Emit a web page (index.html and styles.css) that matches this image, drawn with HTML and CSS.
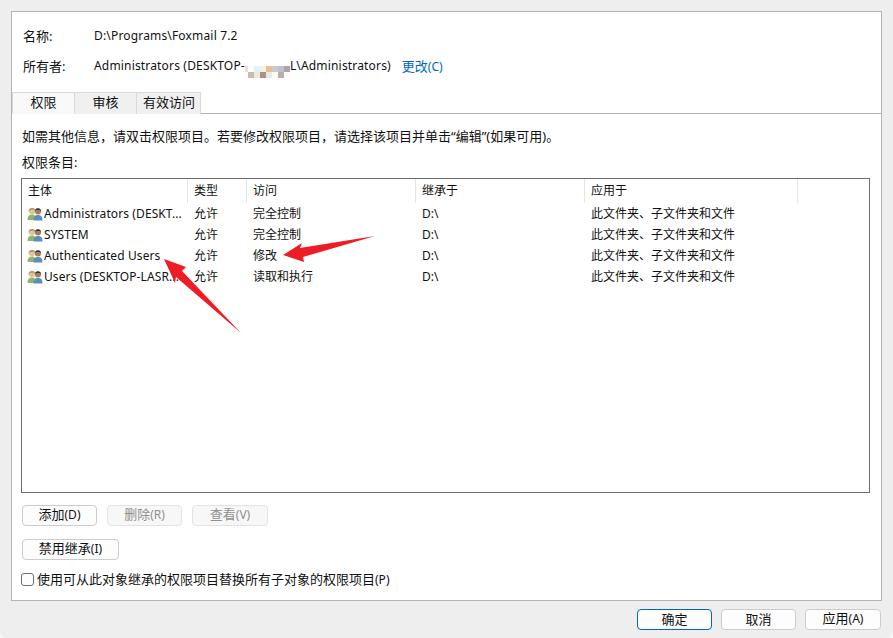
FILE: index.html
```html
<!DOCTYPE html>
<html lang="zh-CN">
<head>
<meta charset="utf-8">
<title>权限</title>
<link rel="stylesheet" href="styles.css">
</head>
<body>
<svg width="0" height="0" class="defs"><defs>
<symbol id="users" viewBox="0 0 16 16">
<path d="M0.500 14 C0.500 10 2.500 8.500 5 8.500 C7.500 8.500 9 10 9 14 Z" fill="#8fb56c"/>
<circle cx="5" cy="5" r="3.200" fill="#e0c49c"/>
<path d="M1.600 6 C1 1 8.500 0.500 8.300 5.500 L7 3.800 L3 4 Z" fill="#ab9a62"/>
<path d="M6.500 14.500 C6.500 10 8.500 9 11 9 C13.500 9 15.500 10 15.500 14.500 Z" fill="#5b8dbd"/>
<circle cx="11" cy="5.500" r="3" fill="#a67c5c"/>
<path d="M8 5.500 C7.500 1 14.500 1 14 5.500 L13 4 L9 4 Z" fill="#2c3038"/>
</symbol>
</defs></svg>
<main class="panel">
<div class="info">
<div class="info-row"><span class="info-label">名称:</span><span class="latin">D:\Programs\Foxmail 7.2</span></div>
<div class="info-row"><span class="info-label">所有者:</span><span class="latin">Administrators (DESKTOP-<span class="mosaic"><i class="m1"></i><i class="m2"></i><i class="m3"></i><i class="m4"></i><i class="m5"></i><i class="m6"></i><i class="m7"></i><i class="m8"></i><i class="m9"></i><i class="m10"></i><i class="m11"></i><i class="m12"></i><i class="m13"></i><i class="m14"></i><i class="m15"></i><i class="m16"></i></span>L\Administrators)</span><a class="change">更改<span class="key">(C)</span></a></div>
</div>
<div class="tabs">
<div class="tab tab-active">权限</div>
<div class="tab tab-2">审核</div>
<div class="tab tab-3">有效访问</div>
</div>
<div class="body">
<p class="hint">如需其他信息，请双击权限项目。若要修改权限项目，请选择该项目并单击“编辑”(如果可用)。</p>
<p class="entries">权限条目:</p>
<div class="list">
<div class="row head"><div class="c c1">主体</div><div class="c c2">类型</div><div class="c c3">访问</div><div class="c c4">继承于</div><div class="c c5">应用于</div></div>
<div class="row"><div class="c c1"><svg class="ico"><use href="#users"/></svg><span class="clip latin">Administrators (DESKT...</span></div><div class="c c2">允许</div><div class="c c3">完全控制</div><div class="c c4">D:\</div><div class="c c5">此文件夹、子文件夹和文件</div></div>
<div class="row"><div class="c c1"><svg class="ico"><use href="#users"/></svg><span class="clip latin">SYSTEM</span></div><div class="c c2">允许</div><div class="c c3">完全控制</div><div class="c c4">D:\</div><div class="c c5">此文件夹、子文件夹和文件</div></div>
<div class="row"><div class="c c1"><svg class="ico"><use href="#users"/></svg><span class="clip latin">Authenticated Users</span></div><div class="c c2">允许</div><div class="c c3">修改</div><div class="c c4">D:\</div><div class="c c5">此文件夹、子文件夹和文件</div></div>
<div class="row"><div class="c c1"><svg class="ico"><use href="#users"/></svg><span class="clip latin">Users (DESKTOP-LASR...</span></div><div class="c c2">允许</div><div class="c c3">读取和执行</div><div class="c c4">D:\</div><div class="c c5">此文件夹、子文件夹和文件</div></div>
</div>
<div class="actions">
<button class="btn">添加<span class="key">(D)</span></button>
<button class="btn" disabled>删除<span class="key">(R)</span></button>
<button class="btn" disabled>查看<span class="key">(V)</span></button>
</div>
<div class="inherit"><button class="btn btn-wide">禁用继承<span class="key">(I)</span></button></div>
<label class="check"><span class="box"></span><span>使用可从此对象继承的权限项目替换所有子对象的权限项目<span class="key">(P)</span></span></label>
</div>
</main>
<footer class="footer">
<button class="btn btn-primary">确定</button>
<button class="btn">取消</button>
<button class="btn btn-last">应用<span class="key">(A)</span></button>
</footer>
<svg class="arrows" width="893" height="638" viewBox="0 0 893 638">
<polygon points="164,259 186,267 182,271 241,333 176,277 175,283" fill="#ee1c25"/>
<polygon points="283,255 302,243 300,248 375,236 303,257 304,262" fill="#ee1c25"/>
</svg>
</body>
</html>
```
FILE: styles.css
```css
* { box-sizing: border-box; }
html { margin: 0; padding: 0; background: #f6f6f6; }
body {
  margin: 0;
  width: 893px; height: 638px; overflow: hidden; position: relative;
  background: #eeeeee; padding: 11px 11px 0; border-radius: 0 0 8px 8px;
  font: 13px/16px "Noto Sans", "Noto Sans CJK SC", sans-serif; color: #111;
}
.defs { position: absolute; }
.panel { width: 871px; height: 590px; background: #fff; border: 1px solid #b4b4b4; }
.info { padding: 14px 0 0 11px; height: 80px; }
.info-row { display: flex; height: 30px; align-items: flex-start; line-height: 20px; }
.info-label { width: 71px; }
.latin { font-size: 12px; letter-spacing: 0.17px; }
.key { font-size: 12px; }
.mosaic { display: inline-grid; grid-template-columns: 3px repeat(7, 6px); grid-auto-rows: 6px; vertical-align: -2px; width: 45px; height: 12px; letter-spacing: 0; }
.mosaic i { display: block; }
.m1{background:#e8dfd4}.m2{background:#fdfdfd}.m3{background:#e3f2fa}.m4{background:#f5f0ea}.m5{background:#e0bf9e}.m6{background:#ccc9c8}.m7{background:#bcc0d8}.m8{background:#aca5a3}
.m9{background:#fff}.m10{background:#c6bdae}.m11{background:#eee8e0}.m12{background:#a69386}.m13{background:#e8e8e4}.m14{background:#fbfbfb}.m15{background:#bbaea2}.m16{background:#fff}
.change { color: #0067c0; margin-left: 11px; }
.tabs { display: flex; height: 22px; border-bottom: 1px solid #b4b4b4; }
.tab { height: 22px; text-align: center; line-height: 19px; background: #f0f0f0; border: 1px solid #d9d9d9; border-left: 0; border-bottom: 0; width: 62px; }
.tab-active { width: 63px; background: #f9f9f9; border-left: 1px solid #d9d9d9; position: relative; z-index: 1; border-bottom: 1px solid #f9f9f9; }
.tab-3 { width: 64px; padding-left: 1px; }
.body { padding: 0 0 0 9px; }
.hint { margin: 14px 0 0 1px; line-height: 16px; }
.entries { margin: 10px 0 0 1px; line-height: 16px; }
.list { width: 849px; height: 315px; margin-top: 8px; border: 1px solid #6e6e6e; font-size: 12px; }
.list .latin { letter-spacing: 0.1px; }
.row { display: flex; height: 21px; line-height: 21px; }
.head { height: 24px; line-height: 24px; }
.c { padding-left: 6px; white-space: nowrap; overflow: hidden; display: flex; align-items: center; }
.head .c { border-right: 1px solid #e5e5e5; display: block; }
.c1 { width: 166px; }
.c2 { width: 59px; }
.c3 { width: 169px; }
.c4 { width: 169px; }
.c5 { width: 213px; }
.ico { width: 16px; height: 16px; margin-right: 1px; flex: none; margin-left: -1px; }
.clip { overflow: hidden; white-space: nowrap; }
.actions { display: flex; gap: 10px; margin-top: 12px; padding-left: 1px; }
.btn { font: inherit; line-height: 16px; height: 21px; width: 75px; padding: 0 0 2px; background: #fdfdfd; color: #111; border: 1px solid #cccccc; border-radius: 4px; }
.btn:disabled { background: #f7f7f7; color: #8f8f8f; border-color: #e3e3e3; }
.actions .btn:last-child { width: 76px; }
.inherit { margin-top: 13px; padding-left: 1px; }
.btn-wide { width: 97px; }
.check { display: flex; align-items: center; gap: 3px; margin-top: 11px; height: 16px; }
.box { width: 13px; height: 13px; border: 1px solid #6e6e6e; border-radius: 3px; background: #fdfdfd; }
.footer { display: flex; gap: 9px; justify-content: flex-end; padding: 8px 1px 0 0; }
.btn-primary { border: 1px solid #0067c0; }
.btn-last { width: 76px; }
.arrows { position: absolute; left: 0; top: 0; pointer-events: none; }
```
